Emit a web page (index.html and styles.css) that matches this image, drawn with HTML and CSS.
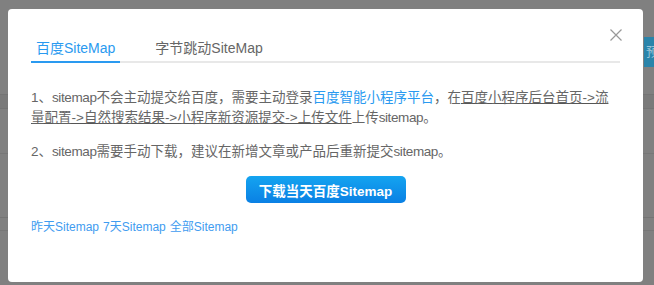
FILE: index.html
```html
<!DOCTYPE html>
<html lang="zh-CN">
<head>
    <meta charset="UTF-8">
    <meta name="viewport" content="width=device-width, initial-scale=1.0">
    <title>SiteMap</title>
    <link rel="stylesheet" href="styles.css">
</head>
<body>
    <span class="page-btn">预</span>

    <div class="modal">
        <button type="button" class="modal-close" aria-label="关闭">
            <svg width="12" height="12" viewBox="0 0 12 12">
                <path d="M0.5 0.5 L11.5 11.5 M11.5 0.5 L0.5 11.5" stroke="#999" stroke-width="1.2" fill="none"/>
            </svg>
        </button>

        <div class="tabs">
            <a href="#" class="tab active">百度SiteMap</a>
            <a href="#" class="tab">字节跳动SiteMap</a>
        </div>

        <p class="tip">
            1、<span class="en">sitemap</span>不会主动提交给百度，需要主动登录<a href="#" class="link">百度智能小程序平台</a>，在<u>百度小程序后台首页-&gt;流量配置-&gt;自然搜索结果-&gt;小程序新资源提交-&gt;上传文件</u>上传<span class="en">sitemap</span>。
        </p>
        <p class="tip tip-second">
            2、<span class="en">sitemap</span>需要手动下载，建议在新增文章或产品后重新提交<span class="en">sitemap</span>。
        </p>

        <div class="actions">
            <button type="button" class="download-btn">下载当天百度Sitemap</button>
        </div>

        <div class="history">
            <a href="#">昨天Sitemap</a>
            <a href="#">7天Sitemap</a>
            <a href="#">全部Sitemap</a>
        </div>
    </div>
</body>
</html>
```

FILE: styles.css
```css
* {
    margin: 0;
    padding: 0;
    box-sizing: border-box;
}

body {
    font-family: 'Liberation Sans', 'Noto Sans CJK SC', sans-serif;
    width: 654px;
    height: 285px;
    overflow: hidden;
    position: relative;
    padding: 9px 0 0 8px;
    background-color: #808080;
    background-image:
        linear-gradient(#747474, #747474),
        linear-gradient(#7a7a7a, #7a7a7a),
        linear-gradient(#747474, #747474),
        linear-gradient(#777777, #777777),
        linear-gradient(#747474, #747474),
        linear-gradient(#777777, #777777);
    background-repeat: no-repeat;
    background-size: 100% 1px, 100% 13px, 100% 1px, 100% 1px, 100% 1px, 100% 1px;
    background-position: 0 94px, 0 95px, 0 108px, 0 153px, 0 217px, 0 230px;
}

/* page content behind the overlay */
.page-btn {
    position: absolute;
    left: 644px;
    top: 37px;
    width: 30px;
    height: 30px;
    background: #2a84aa;
    color: #9cc3d6;
    font-size: 13px;
    line-height: 30px;
    padding-left: 2px;
}

.modal {
    position: relative;
    width: 635px;
    height: 273px;
    background: #fff;
    border-radius: 4px;
    padding: 24px 23px 0 23px;
}

.modal-close {
    position: absolute;
    top: 20px;
    right: 21px;
    width: 12px;
    height: 12px;
    background: none;
    border: none;
    cursor: pointer;
    display: flex;
}

.tabs {
    display: flex;
    border-bottom: 2px solid #e8e8e8;
}

.tab {
    display: block;
    height: 30px;
    line-height: 30px;
    padding: 0 5px;
    margin-right: 30px;
    margin-bottom: -2px;
    font-size: 14px;
    color: #666;
    text-decoration: none;
    border-bottom: 2px solid transparent;
}

.tab.active {
    color: #2a9af0;
    border-bottom-color: #2a9af0;
}

.tip {
    margin-top: 25px;
    font-size: 13.5px;
    line-height: 20px;
    color: #666;
}

.tip .en {
    letter-spacing: -0.4px;
}

.tip u {
    text-decoration-color: #555;
}

.tip-second {
    margin-top: 14px;
}

.link {
    color: #2a9af0;
    text-decoration: none;
}

.actions {
    display: flex;
    justify-content: center;
    margin-top: 14px;
}

.download-btn {
    width: 160px;
    height: 27px;
    border: none;
    border-radius: 5px;
    background: linear-gradient(180deg, #14a4f0 0%, #0a80e4 100%);
    color: #fff;
    font-family: inherit;
    font-size: 13.5px;
    font-weight: bold;
    cursor: pointer;
}

.history {
    display: flex;
    gap: 4px;
    margin-top: 16px;
    line-height: 16px;
    font-size: 12px;
}

.history a {
    color: #3f9cf0;
    text-decoration: none;
}
```
